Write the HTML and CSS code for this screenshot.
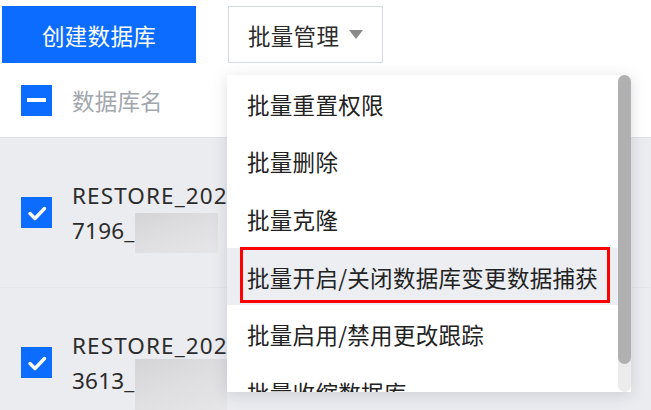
FILE: index.html
```html
<!DOCTYPE html>
<html lang="zh">
<head>
<meta charset="utf-8">
<link rel="stylesheet" href="styles.css">
</head>
<body>
<div class="page">
  <div class="toolbar">
    <button class="btn-primary">创建数据库</button>
    <button class="btn-default">批量管理<span class="caret"></span></button>
  </div>
  <div class="table">
    <div class="thead">
      <span class="cb cb-ind"><span class="dash"></span></span>
      <span class="th-text">数据库名</span>
    </div>
    <div class="row">
      <span class="cb cb-on"><svg viewBox="0 0 30 30" width="30" height="30"><path d="M8 15.5 L13 20.5 L22.5 10.5" fill="none" stroke="#fff" stroke-width="3.4" stroke-linecap="round" stroke-linejoin="round"/></svg></span>
      <div class="name"><div class="ln">RESTORE_202</div><div class="ln num">7196_<span class="blur b1"></span></div></div>
    </div>
    <div class="row">
      <span class="cb cb-on"><svg viewBox="0 0 30 30" width="30" height="30"><path d="M8 15.5 L13 20.5 L22.5 10.5" fill="none" stroke="#fff" stroke-width="3.4" stroke-linecap="round" stroke-linejoin="round"/></svg></span>
      <div class="name"><div class="ln">RESTORE_202</div><div class="ln num">3613_<span class="blur b2"></span></div></div>
    </div>
  </div>
  <div class="menu">
    <ul class="menu-list">
      <li>批量重置权限</li>
      <li>批量删除</li>
      <li>批量克隆</li>
      <li class="active"><span class="mark"></span>批量开启/关闭数据库变更数据捕获</li>
      <li>批量启用/禁用更改跟踪</li>
      <li>批量收缩数据库</li>
    </ul>
    <div class="scroll"><div class="thumb"></div></div>
  </div>
</div>
</body>
</html>
```
FILE: styles.css
```css
* { box-sizing: border-box; }
html, body { margin: 0; padding: 0; }
body {
  width: 651px;
  height: 410px;
  overflow: hidden;
  background: #fff;
  font-family: "Noto Sans", "Noto Sans CJK SC", sans-serif;
  color: #2b2b2b;
}
.page { position: relative; width: 651px; height: 410px; overflow: hidden; }
.toolbar {
  display: flex;
  gap: 32px;
  padding: 6px 0 0 2px;
  height: 63px;
}
.btn-primary {
  width: 194px;
  height: 57px;
  border: none;
  background: #0b6cff;
  color: #fff;
  font: 22.5px "Noto Sans CJK SC", sans-serif;
  letter-spacing: 0.3px;
  padding: 0;
}
.btn-default {
  width: 155px;
  height: 57px;
  border: 1px solid #d5d9e1;
  background: #fff;
  color: #2b2b2b;
  font: 22.5px "Noto Sans CJK SC", sans-serif;
  letter-spacing: 0.3px;
  display: flex;
  align-items: center;
  padding: 0 0 0 19px;
}
.caret {
  margin-left: 10px;
  width: 0; height: 0;
  border-left: 7px solid transparent;
  border-right: 7px solid transparent;
  border-top: 9px solid #8a8a8a;
}
.table { width: 651px; }
.thead {
  height: 75px;
  display: flex;
  align-items: center;
  padding-left: 21px;
  gap: 20px;
  border-bottom: 1px solid #dfe2e9;
  background: #fff;
}
.th-text { font: 22.5px "Noto Sans CJK SC", sans-serif; letter-spacing: 0.2px; color: #a2a6ad; }
.cb {
  width: 31px; height: 31px;
  background: #0b6cff;
  display: flex; align-items: center; justify-content: center;
  flex: none;
}
.dash { width: 19px; height: 4px; background: #fff; }
.row {
  height: 150px;
  display: flex;
  align-items: center;
  padding-left: 21px;
  gap: 20px;
  background: #ebecf0;
  border-bottom: 1px solid #e3e5ea;
}
.name {
  width: 155px;
  height: 70px;
  overflow: visible;
  font-size: 22.5px;
  letter-spacing: 1.1px;
  color: #2b2b2b;
  white-space: nowrap;
}
.ln { height: 35px; line-height: 35px; }
.num { letter-spacing: 0.2px; }
.blur {
  display: inline-block;
  vertical-align: top;
  background: linear-gradient(160deg, #d4d4d7 0%, #dedee1 45%, #e6e6e9 100%);
}
.b1 { width: 83px; height: 40px; margin-left: 1px; }
.b2 { width: 92px; height: 52px; margin-left: 1px; margin-top: -4px; }
.menu {
  position: absolute;
  left: 227px;
  top: 75px;
  width: 404px;
  height: 317px;
  background: #fff;
  box-shadow: 0 3px 14px rgba(60, 70, 90, 0.18);
  display: flex;
  overflow: hidden;
}
.menu-list {
  list-style: none;
  margin: 0;
  padding: 0;
  width: 391px;
}
.menu-list li {
  position: relative;
  height: 57.6px;
  display: flex;
  align-items: center;
  padding-left: 20px;
  font: 22.5px "Noto Sans CJK SC", sans-serif;
  letter-spacing: 0.3px;
  color: #222;
  white-space: nowrap;
}
.menu-list li.active { background: #eceef2; }
.mark {
  position: absolute;
  left: 13px;
  top: -1px;
  width: 370px;
  height: 56px;
  border: 3px solid #ff0000;
}
.scroll {
  width: 13px;
  height: 100%;
  background: #ececec;
  border-radius: 7px;
}
.thumb {
  height: 289px;
  background: #b0b0b0;
  border-radius: 7px;
}
```
